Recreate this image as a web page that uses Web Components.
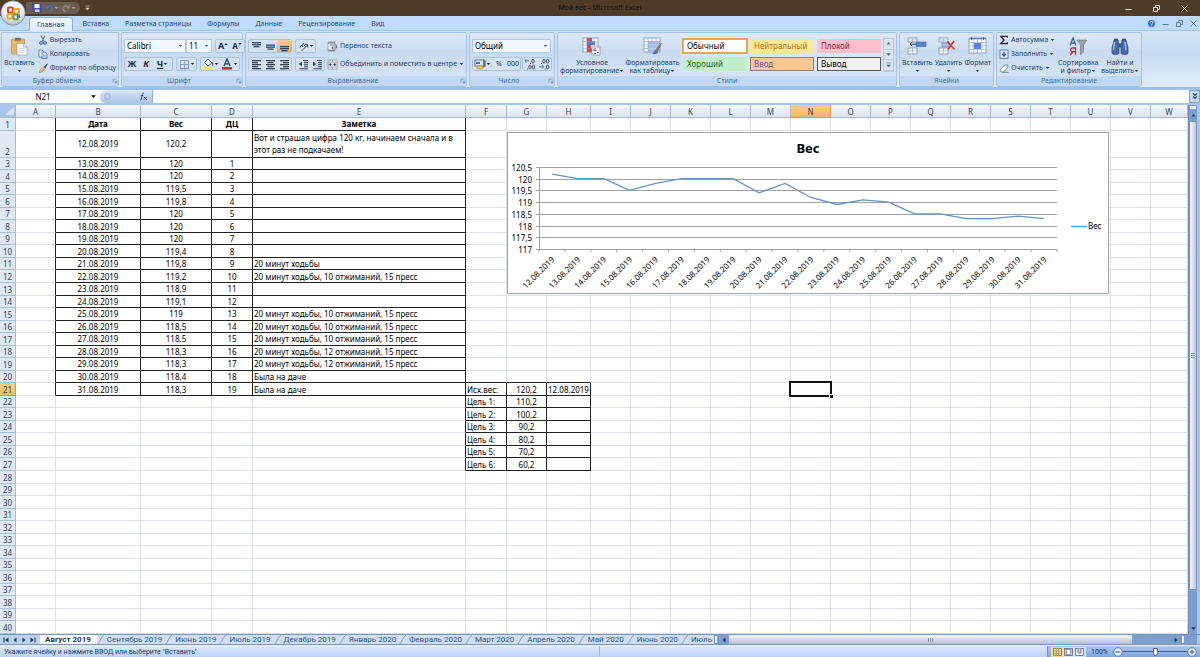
<!DOCTYPE html>
<html lang="ru">
<head>
<meta charset="utf-8">
<title>Мой вес - Microsoft Excel</title>
<style>
html,body{margin:0;height:100%;overflow:hidden}
body{font-family:"Noto Sans","Open Sans",sans-serif;font-size:7px;line-height:8px;color:#1e3f7a}
</style>
</head>
<body>
<xl-app></xl-app>
<script>
const RESET = `*{box-sizing:border-box}
button,input,select{font:inherit;color:inherit;margin:0;padding:0;border:0;background:none;border-radius:0;outline:0}
button{display:flex;align-items:center;justify-content:center;white-space:nowrap}
xl-icon{flex:none}`;

function define(name, css, html, setup) {
  const tpl = document.createElement('template');
  tpl.innerHTML = `<style>${RESET}${css}</style>${html}`;
  customElements.define(name, class extends HTMLElement {
    constructor() {
      super();
      this.attachShadow({mode: 'open'}).append(tpl.content.cloneNode(true));
    }
    connectedCallback() { if (setup) setup.call(this, this.shadowRoot); }
  });
}

/* ---------- icons: name -> [width, height, markup] ---------- */
const lines = (rows, y0 = 2) => rows.map(([x, w], i) => `<rect x="${x}" y="${y0 + i * 2}" width="${w}" height="1.3" fill="#35405a"/>`).join('');
const gridIcon = (x, y, w, h, n) => {
  let s = `<rect x="${x}" y="${y}" width="${w}" height="${h}" fill="#fff" stroke="#7a8fb5" stroke-width=".8"/>`;
  for (let i = 1; i < n; i++) s += `<path d="M${x + w * i / n} ${y}v${h}M${x} ${y + h * i / n}h${w}" stroke="#9aabca" stroke-width=".7"/>`;
  return s;
};
const ICONS = {
  office: [26, 26, `<defs><radialGradient id="g" cx=".5" cy=".35" r=".65"><stop offset="0" stop-color="#fff"/><stop offset=".65" stop-color="#e8eaee"/><stop offset="1" stop-color="#a9b3c2"/></radialGradient></defs><circle cx="13" cy="13" r="12.2" fill="url(#g)" stroke="#8290a5" stroke-width=".8"/><g fill="none" stroke-width="2"><rect x="8" y="7.500" width="5" height="5" rx="1" stroke="#dd4a22"/><rect x="14" y="9" width="5" height="4.500" rx="1" stroke="#eea33a"/><rect x="7.500" y="14" width="5" height="4.500" rx="1" stroke="#e8a91c"/><rect x="13.500" y="14.500" width="4.500" height="5" rx="1" stroke="#6aa43a"/></g><path d="M17 14.500h3v3.500h-3z" fill="#3f78c4"/>`],
  save: [10, 10, `<path d="M1 1h8v8H1z" fill="#4b54c0" stroke="#2c338b" stroke-width=".6"/><rect x="2.500" y="1" width="5" height="4" fill="#f2f4ff"/><rect x="3" y="6.500" width="4.500" height="2.500" fill="#d3d8f2"/>`],
  undo: [10, 10, `<path d="M2.500 4.500C5 1.800 8.500 3 8.300 5.600 8 7.500 6.500 8.300 5.500 8.500" fill="none" stroke="#4a6cc3" stroke-width="1.600"/><path d="M1.200 2l.3 4.300L5 4.800z" fill="#4a6cc3"/>`],
  redo: [10, 10, `<path d="M7.500 4.500C5 1.800 1.700 3 1.800 5.600 2 7.500 3.500 8.300 4.500 8.500" fill="none" stroke="#8b8787" stroke-width="1.400"/><path d="M8.800 2l-.3 4.300L5 4.800z" fill="#8b8787"/>`],
  down: [5, 4, `<path d="M.8 1h3.400L2.500 3z" fill="currentColor"/>`],
  bar: [5, 6, `<path d="M.5 1h4M.8 3h3.400L2.500 5z" stroke="currentColor" stroke-width=".7" fill="currentColor"/>`],
  launcher: [6, 6, `<path d="M1 4.500V1h3.500" fill="none" stroke="#7e9cc8" stroke-width=".8"/><path d="M2.500 2.500l2 2M5 2.800V5H2.800z" fill="#7e9cc8" stroke="#7e9cc8" stroke-width=".6"/>`],
  paste: [20, 19, `<rect x="2.500" y="2" width="13" height="15" rx="1" fill="#ecb75c" stroke="#b98a3e" stroke-width=".7"/><rect x="6" y=".8" width="6" height="3" rx="1" fill="#6c6f7c"/><path d="M8 6.500h6.500l3.500 3.500v8H8z" fill="#fff" stroke="#8b9cbb" stroke-width=".7"/><path d="M14.500 6.500V10H18" fill="#dfe7f5" stroke="#8b9cbb" stroke-width=".6"/><path d="M10 11.500h6M10 13.500h6M10 15.500h4" stroke="#b9c7df" stroke-width=".7"/>`],
  cut: [10, 10, `<path d="M3 .5l3 6M7 .5l-3 6" stroke="#5b79a8" stroke-width="1.100"/><circle cx="3" cy="8" r="1.400" fill="none" stroke="#2f57a8"/><circle cx="7" cy="8" r="1.400" fill="none" stroke="#2f57a8"/>`],
  copy: [10, 10, `<path d="M1 1h3l2 2v5H1z" fill="#fff" stroke="#3c66ad" stroke-width=".8"/><path d="M4 3h3l2 2v4.500H4z" fill="#dfeafc" stroke="#3c66ad" stroke-width=".8"/><path d="M5 6.500h3M5 8h3" stroke="#3c66ad" stroke-width=".5"/>`],
  brush: [10, 10, `<path d="M9.500.8L6 4l1 1.300z" fill="#4c5e89" stroke="#4c5e89"/><path d="M5.500 4L2 7l-1 2.500 3-.5 3.200-3.500z" fill="#f1c24e" stroke="#a9843a" stroke-width=".6"/>`],
  borders: [11, 11, `<path d="M1.500 1.500h8v8h-8zM5.500 1.500v8M1.500 5.500h8" fill="none" stroke="#7d93bb" stroke-width=".8"/><path d="M1 9.700h9" stroke="#7d93bb" stroke-width="1"/>`],
  fill: [12, 12, `<path d="M2.500 4.500L6 1l4 4-4 3z" fill="#eaf0fa" stroke="#47639c" stroke-width=".9"/><path d="M9.500 4c1.500 1 1.500 2.500 1 4" stroke="#3a6ac0" stroke-width="1.200" fill="none"/><rect x="1" y="9" width="10" height="2.600" fill="#fff03c"/>`],
  fontcolor: [12, 12, `<path d="M3 8L6 1l3 7M4 5.800h4" fill="none" stroke="#27407c" stroke-width="1.300"/><rect x="1" y="9" width="10" height="2.600" fill="#e02424"/>`],
  top: [11, 11, lines([[1, 9], [1, 9], [2.5, 6]], 1)],
  middle: [11, 11, lines([[1, 9], [1, 9], [2.5, 6]], 3.5)],
  bottom: [11, 11, lines([[1, 9], [1, 9], [2.5, 6]], 5)],
  left: [11, 11, lines([[1, 9], [1, 6], [1, 9], [1, 6], [1, 9]], 1)],
  center: [11, 11, lines([[1, 9], [2.5, 6], [1, 9], [2.5, 6], [1, 9]], 1)],
  right: [11, 11, lines([[1, 9], [4, 6], [1, 9], [4, 6], [1, 9]], 1)],
  orient: [11, 11, `<path d="M2 6.500l1.500-2.500 1.500 2M4.500 4.500l1-2.500M6 5l2-2.500" fill="none" stroke="#35405a" stroke-width="1"/><path d="M3.500 10L9.500 4M9.800 6.500V3.700H7" fill="none" stroke="#35405a" stroke-width=".9"/>`],
  outdent: [11, 11, `<path d="M5 1.500h5M6 3.600h4M6 5.700h4M6 7.800h4M1.500 9.800H10" stroke="#35405a" stroke-width="1.100"/><path d="M.5 5L4 2.700v4.600z" fill="#27498f"/>`],
  indent: [11, 11, `<path d="M5 1.500h5M6 3.600h4M6 5.700h4M6 7.800h4M1.500 9.800H10" stroke="#35405a" stroke-width="1.100"/><path d="M4.500 5L1 2.700v4.600z" fill="#27498f"/>`],
  wrap: [11, 11, `<rect x="1" y="1" width="7" height="9" fill="#eef2f8" stroke="#8a93a6" stroke-width=".7"/><path d="M1 1.800h7M1 9.400h7" stroke="#777f90" stroke-width="1.200"/><path d="M2.500 4h7v3H5M6.500 5.500L4.800 7l1.700 1.500" fill="none" stroke="#5c6c90" stroke-width=".9"/>`],
  merge: [11, 11, `<rect x="1" y="1" width="9" height="9" fill="#eef2f8" stroke="#8a93a6" stroke-width=".7"/><path d="M1 3.200h9M1 8h9M5.500 1v2M5.500 8v2" stroke="#8a93a6" stroke-width=".7"/><path d="M1.500 5.600h2M9.500 5.600h-2M3 4.300v2.600l1.200-1.300zM8 4.300v2.600L6.800 5.600z" stroke="#27407c" stroke-width=".6"/>`],
  money: [12, 12, `<rect x="1" y="2" width="9" height="6" fill="#dfe7dc" stroke="#44618f" stroke-width=".8"/><rect x="2" y="4" width="4" height="2" fill="#4a6cb5"/><path d="M9.500 1l2 1.500v6L9 10z" fill="#4a6cb5"/><ellipse cx="6" cy="9.500" rx="3.500" ry="1.700" fill="#eac04c" stroke="#a07d24" stroke-width=".5"/>`],
  inc: [12, 12, `<g fill="none" stroke="#26304a" stroke-width=".8"><ellipse cx="9" cy="3.200" rx="1.200" ry="1.900"/><ellipse cx="6" cy="9" rx="1.200" ry="1.900"/><ellipse cx="9.600" cy="9" rx="1.200" ry="1.900"/></g><path d="M6.500 4.800v1M3.500 10.500v1" stroke="#26304a" stroke-width=".9"/><path d="M5 2.800H1M2.400 1L1 2.800l1.400 1.700" fill="none" stroke="#3866b8" stroke-width=".9"/>`],
  dec: [12, 12, `<g fill="none" stroke="#26304a" stroke-width=".8"><ellipse cx="6" cy="3.200" rx="1.200" ry="1.900"/><ellipse cx="9.600" cy="3.200" rx="1.200" ry="1.900"/><ellipse cx="9.600" cy="9" rx="1.200" ry="1.900"/></g><path d="M3.500 4.800v1M7.300 10.500v1" stroke="#26304a" stroke-width=".9"/><path d="M1 8.800h4.500M4.200 7l1.400 1.800-1.400 1.700" fill="none" stroke="#3866b8" stroke-width=".9"/>`],
  cond: [20, 19, gridIcon(1, 1, 15, 14, 4) + `<rect x="5" y="1" width="5" height="3.500" fill="#d8474e"/><rect x="5" y="4.500" width="8" height="3.500" fill="#5b79cf"/><rect x="5" y="8" width="4" height="3.500" fill="#d8474e"/><rect x="5" y="11.500" width="6" height="3.500" fill="#d8474e"/><rect x="10" y="10" width="8" height="8" fill="#f5f6f9" stroke="#777f90" stroke-width=".6"/><path d="M11.500 12.500l2.500-1M11.500 13.500h3M15 15.500h2M12 16.500h2" stroke="#35405a" stroke-width=".8"/>`],
  tablefmt: [20, 19, gridIcon(1, 1, 16, 14, 4) + `<rect x="5" y="4.500" width="12" height="10" fill="#6f95e2" opacity=".65"/><path d="M5 8h12M5 11.500h12M9 4.500v10M13 4.500v10" stroke="#dbe6fb" stroke-width=".6"/><path d="M18.500 6l-5 6 1.500 1.500z" fill="#a9783c" stroke="#85592a" stroke-width=".6"/><path d="M13.500 12.500c-2.500 0-2 3-4.500 4 3 1.500 6.500.5 6-2.500z" fill="#56749f"/>`],
  insert: [20, 18, gridIcon(1, 1, 9, 4, 2) + gridIcon(1, 11, 9, 6, 2) + `<rect x="9" y="5" width="10" height="4.500" fill="#5b83cf" stroke="#3a60a8" stroke-width=".6"/><path d="M9 7.200H3M5.300 5.200L3 7.200l2.300 2" fill="none" stroke="#35405a"/>`],
  remove: [20, 18, gridIcon(1, 1, 9, 4, 2) + gridIcon(1, 11, 9, 6, 2) + `<rect x="4" y="6" width="7" height="4" fill="#a9bfe8" stroke="#5c78ae" stroke-width=".6"/><path d="M9.500 4.500l7 8M16 4l-6 8.500" stroke="#e0382c" stroke-width="1.700"/>`],
  format: [20, 18, gridIcon(1, 2, 17, 14, 4) + `<rect x="6" y="6" width="7" height="6" fill="#5b83dc"/><path d="M1 1.200h17M3.500 0v3M15.500 0v3" stroke="#35507f" stroke-width=".8"/>`],
  sum: [10, 10, `<path d="M8.300 2.800V1.300H1.800L5 5 1.800 8.700h6.500V7.200" fill="none" stroke="#1c2438" stroke-width="1.300"/>`],
  filldown: [10, 10, `<rect x="1" y="1" width="8" height="8.500" fill="#e9f0fd" stroke="#3d65b4" stroke-width=".8"/><path d="M5 2.500v4M3 4.800l2 2.400 2-2.400" fill="none" stroke="#2a54ad" stroke-width="1.300"/>`],
  eraser: [10, 10, `<path d="M1 7l4.500-5h3.500l-.5 2.500L4.500 9H2z" fill="#fff" stroke="#5a6f97" stroke-width=".8"/><path d="M3.500 9.300h6" stroke="#5a6f97" stroke-width=".8"/>`],
  sort: [20, 19, `<path d="M9 3h10l-3.500 5v7l-3 2.500V8z" fill="#9c9fa6" stroke="#6d7078" stroke-width=".6"/><path d="M2 8.500L5 1l3 7.500M3.200 6h3.600" fill="none" stroke="#3b62b4" stroke-width="1.300"/><path d="M7.500 18v-7H4.500c-2.500 0-2.500 3.700 0 3.700h3M5 14.700L2.200 18" fill="none" stroke="#b0303a" stroke-width="1.300"/>`],
  find: [20, 19, `<path d="M4 3h4l1 4v9c0 2-7 2-7 0v-5zM16 3h-4l-1 4v9c0 2 7 2 7 0v-5z" fill="#4a6aa9" stroke="#2e4a80" stroke-width=".7"/><path d="M4.500 5L3.500 13M15 5l1 8" stroke="#a9c0ea" stroke-width="1.400"/><rect x="8.500" y="6.500" width="3" height="4" fill="#37568f"/><path d="M4 2.500h4M12 2.500h4" stroke="#2e4a80" stroke-width="1.400"/>`],
  help: [9, 9, `<circle cx="4.500" cy="4.500" r="4" fill="#3a66c8" stroke="#dfe9fa" stroke-width=".7"/><path d="M3.200 3.600c0-1.700 2.700-1.600 2.700 0 0 1-1.300 1-1.300 2M4.600 6.400v.9" stroke="#fff" stroke-width=".9" fill="none"/>`],
  min: [9, 9, `<path d="M1.500 5.500h6" stroke="currentColor"/>`],
  restore: [9, 9, `<path d="M1.500 3.500h4v4h-4zM3.500 3.500v-2h4v4h-2" fill="none" stroke="currentColor" stroke-width=".9"/>`],
  close: [9, 9, `<path d="M1.500 1.500l6 6M7.500 1.500l-6 6" stroke="currentColor" stroke-width=".9"/>`],
  fx: [9, 9, `<path d="M5 1C3.500.8 3.300 2 3 4S2.500 8.300 1 8M1.800 3.500h2.500M4.800 4.800l3 3M7.800 4.800l-3 3" fill="none" stroke="#2b3c63" stroke-width=".9"/>`],
  chev: [8, 9, `<path d="M2 1.500l2 2 2-2M2 4.500l2 2 2-2" fill="none" stroke="#26457c" stroke-width="1.200"/>`],
  corner: [12, 10, `<path d="M11 1v8H2z" fill="#d7e4f5"/>`],
  first: [8, 8, `<path d="M2 1.500v5" stroke="currentColor"/><path d="M6.500 1.500v5L3 4z" fill="currentColor"/>`],
  prev: [8, 8, `<path d="M5.500 1.500v5L2.500 4z" fill="currentColor"/>`],
  next: [8, 8, `<path d="M2.500 1.500v5L5.500 4z" fill="currentColor"/>`],
  last: [8, 8, `<path d="M6 1.500v5" stroke="currentColor"/><path d="M1.500 1.500v5L5 4z" fill="currentColor"/>`],
  up: [7, 7, `<path d="M1.500 4.500h4L3.500 2z" fill="currentColor"/>`],
  dn: [7, 7, `<path d="M1.200 2.300h4.600L3.500 5z" fill="currentColor"/>`],
  sup: [4, 9, `<path d="M.3 3h3.400L2 1z" fill="currentColor"/>`],
  sdn: [4, 9, `<path d="M.3 1h3.400L2 3z" fill="currentColor"/>`],
  slash: [7, 10, `<path d="M0 9.500C2 9.500 4.500.5 7 .5" fill="none" stroke="#6f8cba" stroke-width=".8"/>`],
  view1: [9, 8, `<rect x=".5" y=".5" width="8" height="7" fill="#fff3c4" stroke="#8a7440" stroke-width=".8"/><path d="M.5 3h8M.5 5.300h8M3.200.5v7M5.800.5v7" stroke="#8a7440" stroke-width=".7"/>`],
  view2: [9, 8, `<rect x=".5" y=".5" width="8" height="7" fill="#c8ccd6" stroke="#5d6c8a" stroke-width=".8"/><rect x="2.500" y="1.500" width="4" height="5" fill="#fff" stroke="#5d6c8a" stroke-width=".6"/>`],
  view3: [9, 8, `<rect x=".5" y=".5" width="8" height="7" fill="#f4f6fa" stroke="#5d6c8a" stroke-width=".8"/><path d="M3 .5v4.500h3V.5" fill="#c8ccd6" stroke="#5d6c8a" stroke-width=".8"/>`],
  minus: [10, 10, `<circle cx="5" cy="5" r="4.200" fill="#e9f1fd" stroke="#4c689b" stroke-width=".8"/><path d="M2.700 5h4.600" stroke="#35507f"/>`],
  plus: [10, 10, `<circle cx="5" cy="5" r="4.200" fill="#e9f1fd" stroke="#4c689b" stroke-width=".8"/><path d="M2.700 5h4.600M5 2.700v4.600" stroke="#35507f"/>`],
};
define('xl-icon', `:host{display:inline-flex}span{display:flex}svg{display:block}`, `<span></span>`, function (root) {
  const [w, h, body] = ICONS[this.getAttribute('name')];
  root.querySelector('span').innerHTML = `<svg width="${w}" height="${h}" viewBox="0 0 ${w} ${h}" aria-hidden="true">${body}</svg>`;
});

/* ---------- title bar ---------- */
define('xl-titlebar', `
:host{display:grid;grid-template-columns:1fr auto 1fr;align-items:center;height:16px;background:#503c26;color:#120c05}
.qat{display:flex;align-items:center;height:13px;margin-left:26px}
.pill{display:flex;align-items:center;gap:2px;height:12px;padding:0 4px 0 6px;border-radius:0 6px 6px 0;background:#6b5d51;color:#b3aaa3}
.more{margin-left:5px;color:#cfc8c2}
.win{display:flex;justify-content:flex-end;gap:19px;padding-right:11px;color:#fff}`,
`<div class="qat"><div class="pill"><button aria-label="Сохранить"><xl-icon name="save"></xl-icon></button><button aria-label="Отменить"><xl-icon name="undo"></xl-icon><xl-icon name="down"></xl-icon></button><button aria-label="Вернуть"><xl-icon name="redo"></xl-icon><xl-icon name="down"></xl-icon></button></div><button class="more" aria-label="Настройка панели"><xl-icon name="bar"></xl-icon></button></div>
<span>Мой вес - Microsoft Excel</span>
<div class="win"><button aria-label="Свернуть"><xl-icon name="min"></xl-icon></button><button aria-label="Восстановить"><xl-icon name="restore"></xl-icon></button><button aria-label="Закрыть"><xl-icon name="close"></xl-icon></button></div>`);

/* ---------- ribbon tabs ---------- */
define('xl-menu', `
:host{display:flex;height:15px;padding-left:29px;background:#bfdbff;border-bottom:1px solid #9dc0ea;color:#1f4788}
button{padding:1px 8px 0;height:15px}
button:first-of-type{margin:1px 2px 0 0;height:14px;padding:0 7px;background:linear-gradient(#f4f9ff,#dfeafa);border:1px solid #8fb3e0;border-bottom:0;border-radius:3px 3px 0 0}
.doc{display:flex;gap:5px;align-items:center;margin-left:auto;padding-right:2px;color:#5874a2}
.doc button,.doc button:first-of-type{padding:0;margin:0;height:9px;width:9px;border:0;background:none}`,
`<button>Главная</button><button>Вставка</button><button>Разметка страницы</button><button>Формулы</button><button>Данные</button><button>Рецензирование</button><button>Вид</button>
<div class="doc"><button aria-label="Справка"><xl-icon name="help"></xl-icon></button><button aria-label="Свернуть книгу"><xl-icon name="min"></xl-icon></button><button aria-label="Восстановить книгу"><xl-icon name="restore"></xl-icon></button><button aria-label="Закрыть книгу"><xl-icon name="close"></xl-icon></button></div>`);

/* ---------- ribbon pieces ---------- */
define('xl-group', `
:host{display:flex;flex-direction:column;flex:none;height:55px;border:1px solid #a5c3ea;border-radius:2px;background:linear-gradient(#dce8f7,#cfdff3 30%,#c8daf0 32%,#d9e8f8)}
.body{display:flex;flex:1;min-height:0;align-items:flex-start;justify-content:space-between;padding:0 2px}
footer{display:flex;align-items:center;height:10px;background:#c0d8f1;color:#4570b0}
footer span{flex:1;text-align:center}`,
`<div class="body"><slot></slot></div><footer><span></span></footer>`, function (root) {
  root.querySelector('footer span').textContent = this.getAttribute('label');
  if (this.hasAttribute('launcher')) root.querySelector('footer').insertAdjacentHTML('beforeend', '<xl-icon name="launcher"></xl-icon>');
});

define('xl-big', `
:host{display:block}
button{flex-direction:column;justify-content:flex-start;height:42px;padding-top:4px;text-align:center;color:inherit}
.i{display:flex;height:19px;margin-bottom:3px}
.t{white-space:pre;line-height:8px}
.t xl-icon{vertical-align:middle;height:8px;align-items:center}`,
`<button><span class="i"></span><span class="t"><slot></slot></span></button>`, function (root) {
  root.querySelector('.i').innerHTML = `<xl-icon name="${this.getAttribute('icon')}"></xl-icon>`;
  root.querySelector('.t').insertAdjacentHTML('beforeend', '<xl-icon name="down"></xl-icon>');
});

define('xl-small', `
:host{display:block}
button{height:14px;gap:2px;justify-content:flex-start}`,
`<button><slot></slot></button>`, function (root) {
  const b = root.querySelector('button');
  b.insertAdjacentHTML('afterbegin', `<xl-icon name="${this.getAttribute('icon')}"></xl-icon>`);
  if (this.hasAttribute('menu')) b.insertAdjacentHTML('beforeend', '<xl-icon name="down"></xl-icon>');
});

define('xl-combo', `
:host{display:flex;position:relative;height:14px;background:#f3f8ff;border:1px solid #b0c8e8;color:#000;font-size:8px}
select{flex:1;min-width:0;appearance:none;padding-left:2px;line-height:12px}
xl-icon{position:absolute;right:2px;top:4px;color:#3a5c97;pointer-events:none}`,
`<select><option></option></select><xl-icon name="down"></xl-icon>`, function (root) {
  root.querySelector('select').setAttribute('aria-label', this.getAttribute('label'));
  root.querySelector('option').textContent = this.getAttribute('value');
});

/* ---------- ribbon ---------- */
define('xl-ribbon', `
:host{display:flex;gap:2px;height:59px;padding:1px 1px 0;background:linear-gradient(#d5e4f6,#c7daf1 40%,#dcebfb 90%);border-bottom:3px solid #9dbfe8}
.clip{width:118px}.font{width:122px}.align{width:222px}.num{width:86px}.styles{width:340px}.cells{width:95px}.edit{width:146px}
.col{display:flex;flex-direction:column}
.two{gap:4px;padding-top:6px}
.row{display:flex;gap:3px}
.set{display:flex;height:14px;border:1px solid #a9c3e6;border-radius:2px;background:#d3e2f5}
.set button{width:14px;color:#1d2b4a}
.set button.m{width:19px}
.set button.on{background:linear-gradient(#fcd08a,#f7ab45)}
.set b,.set i{font-size:9px}
.gal{display:grid;grid-template-columns:repeat(3,66px) 11px;grid-template-rows:16px 16px;gap:2px 1px;margin-top:4px;padding:1px 0 0 1px;background:#d9e6f7;font-size:8px;color:#000}
.gal button{justify-content:flex-start;padding-left:3px;margin:1px;border:1px solid transparent}
.gal .n{margin:0;background:#fff;border:2px solid #e4a94c;padding-left:3px}
.gal .neu{background:#ffe795;color:#a5742a}
.gal .bad{background:#ffbfcb;color:#97182c}
.gal .good{background:#c3eccb;color:#1a6b27}
.gal .in{background:#fdc794;color:#6b5a78;border-color:#8b8178}
.gal .out{background:#f1f1f1;border-color:#55585e}
.sc{grid-column:4;grid-row:1/3;display:flex;flex-direction:column;border:1px solid #b6cbe8;color:#4d6ca3}
.gal .sc button{flex:1;margin:0;padding:0;justify-content:center;border:0;border-bottom:1px solid #b6cbe8}`,
`<xl-group class="clip" label="Буфер обмена" launcher>
  <xl-big icon="paste">Вставить
</xl-big>
  <div class="col"><xl-small icon="cut">Вырезать</xl-small><xl-small icon="copy">Копировать</xl-small><xl-small icon="brush">Формат по образцу</xl-small></div>
</xl-group>
<xl-group class="font" label="Шрифт" launcher>
  <div class="col two">
    <div class="row"><div class="row" style="gap:0"><xl-combo style="width:62px" label="Шрифт" value="Calibri"></xl-combo><xl-combo style="width:26px" label="Размер" value="11"></xl-combo></div>
      <div class="set"><button aria-label="Увеличить"><b>A</b><xl-icon name="sup"></xl-icon></button><button aria-label="Уменьшить"><b style="font-size:8px">A</b><xl-icon name="sdn"></xl-icon></button></div></div>
    <div class="row"><div class="set"><button><b>Ж</b></button><button><b><i>К</i></b></button><button class="m"><b><u>Ч</u></b><xl-icon name="down"></xl-icon></button></div>
      <div class="set"><button class="m" aria-label="Границы"><xl-icon name="borders"></xl-icon><xl-icon name="down"></xl-icon></button></div>
      <div class="set"><button class="m" aria-label="Заливка"><xl-icon name="fill"></xl-icon><xl-icon name="down"></xl-icon></button><button class="m" aria-label="Цвет текста"><xl-icon name="fontcolor"></xl-icon><xl-icon name="down"></xl-icon></button></div></div>
  </div>
</xl-group>
<xl-group class="align" label="Выравнивание" launcher>
  <div class="col two">
    <div class="row"><div class="set"><button aria-label="По верхнему краю"><xl-icon name="top"></xl-icon></button><button aria-label="По середине"><xl-icon name="middle"></xl-icon></button><button class="on" aria-label="По нижнему краю"><xl-icon name="bottom"></xl-icon></button></div><div class="set"><button class="m" aria-label="Ориентация"><xl-icon name="orient"></xl-icon><xl-icon name="down"></xl-icon></button></div></div>
    <div class="row"><div class="set"><button aria-label="Влево"><xl-icon name="left"></xl-icon></button><button aria-label="По центру"><xl-icon name="center"></xl-icon></button><button aria-label="Вправо"><xl-icon name="right"></xl-icon></button></div><div class="set"><button aria-label="Уменьшить отступ"><xl-icon name="outdent"></xl-icon></button><button aria-label="Увеличить отступ"><xl-icon name="indent"></xl-icon></button></div></div>
  </div>
  <div class="col two"><xl-small icon="wrap">Перенос текста</xl-small><xl-small icon="merge" menu>Объединить и поместить в центре</xl-small></div>
</xl-group>
<xl-group class="num" label="Число" launcher>
  <div class="col two">
    <xl-combo style="width:79px" label="Формат" value="Общий"></xl-combo>
    <div class="row" style="gap:1px"><div class="set"><button class="m" aria-label="Денежный"><xl-icon name="money"></xl-icon><xl-icon name="down"></xl-icon></button><button>%</button><button>000</button></div><div class="set"><button aria-label="Увеличить разрядность"><xl-icon name="inc"></xl-icon></button><button aria-label="Уменьшить разрядность"><xl-icon name="dec"></xl-icon></button></div></div>
  </div>
</xl-group>
<xl-group class="styles" label="Стили">
  <xl-big icon="cond">Условное
форматирование</xl-big>
  <xl-big icon="tablefmt">Форматировать
как таблицу</xl-big>
  <div class="gal"><button class="n">Обычный</button><button class="neu">Нейтральный</button><button class="bad">Плохой</button><button class="good">Хороший</button><button class="in">Ввод</button><button class="out">Вывод</button>
    <div class="sc"><button aria-label="Вверх"><xl-icon name="up"></xl-icon></button><button aria-label="Вниз"><xl-icon name="dn"></xl-icon></button><button aria-label="Все стили"><xl-icon name="bar"></xl-icon></button></div></div>
</xl-group>
<xl-group class="cells" label="Ячейки">
  <xl-big icon="insert">Вставить
</xl-big><xl-big icon="remove">Удалить
</xl-big><xl-big icon="format">Формат
</xl-big>
</xl-group>
<xl-group class="edit" label="Редактирование">
  <div class="col"><xl-small icon="sum" menu>Автосумма</xl-small><xl-small icon="filldown" menu>Заполнить</xl-small><xl-small icon="eraser" menu>Очистить</xl-small></div>
  <xl-big icon="sort">Сортировка
и фильтр</xl-big>
  <xl-big icon="find">Найти и
выделить</xl-big>
</xl-group>`);

/* ---------- formula bar ---------- */
define('xl-formula', `
:host{display:flex;height:15px;background:#fff;border-bottom:2px solid #a9c6ea;font-size:8px;color:#000}
.name{width:86px;text-align:center}
.drop{width:14px;color:#000}
.fx{display:flex;align-items:center;justify-content:space-between;width:53px;padding:0 4px;border-radius:6px 0 0 6px;border-right:1px solid #8fb0dc;background:linear-gradient(#dbe8f9,#a9c4e8)}
.fx i{width:7px;height:7px;border-radius:50%;background:#bdd0ea;border:1px solid #9ab4da}
.txt{flex:1;padding:0 4px}
.exp{width:11px;background:#c6dbf5;border:1px solid #7fa3d4}`,
`<input class="name" value="N21" aria-label="Имя"><button class="drop" aria-label="Список имён"><xl-icon name="dn"></xl-icon></button>
<div class="fx"><i></i><button aria-label="Вставить функцию"><xl-icon name="fx"></xl-icon></button></div>
<input class="txt" aria-label="Строка формул"><button class="exp" aria-label="Развернуть"><xl-icon name="chev"></xl-icon></button>`);

/* ---------- data ---------- */
const WALK = '20 минут ходьбы', GYM10 = WALK + ', 10 отжиманий, 15 пресс', GYM12 = WALK + ', 12 отжиманий, 15 пресс';
const LOG = [
  ['12.08.2019', '120,2', '', 'Вот и страшая цифра 120 кг, начинаем сначала и в этот раз не подкачаем!'],
  ['13.08.2019', '120', '1', ''], ['14.08.2019', '120', '2', ''], ['15.08.2019', '119,5', '3', ''],
  ['16.08.2019', '119,8', '4', ''], ['17.08.2019', '120', '5', ''], ['18.08.2019', '120', '6', ''],
  ['19.08.2019', '120', '7', ''], ['20.08.2019', '119,4', '8', ''], ['21.08.2019', '119,8', '9', WALK],
  ['22.08.2019', '119,2', '10', GYM10], ['23.08.2019', '118,9', '11', ''], ['24.08.2019', '119,1', '12', ''],
  ['25.08.2019', '119', '13', GYM10], ['26.08.2019', '118,5', '14', GYM10], ['27.08.2019', '118,5', '15', GYM10],
  ['28.08.2019', '118,3', '16', GYM12], ['29.08.2019', '118,3', '17', GYM12],
  ['30.08.2019', '118,4', '18', 'Была на даче'], ['31.08.2019', '118,3', '19', 'Была на даче']];
const GOALS = [['Исх.вес:', '120,2', '12.08.2019'], ['Цель 1:', '110,2', ''], ['Цель 2:', '100,2', ''], ['Цель 3:', '90,2', ''],
  ['Цель 4:', '80,2', ''], ['Цель 5:', '70,2', ''], ['Цель 6:', '60,2', '']];

/* ---------- grid ---------- */
define('xl-grid', `
:host{display:block;min-width:0;min-height:0;overflow:hidden;background:#fff;color:#000;font-size:8px;line-height:12px}
table{width:100%;height:100%;table-layout:fixed;border-collapse:separate;border-spacing:0}
tr{height:12px}
thead tr{height:13px}
tr.tall{height:26px}
td,th{padding:0;font-weight:400;border-right:1px solid #dadfe9;border-bottom:1px solid #dadfe9;text-align:center;vertical-align:middle;white-space:nowrap;line-height:11px}
thead th{background:linear-gradient(#f4f8fc,#dce3ee);border-color:#a9b7cf;color:#33415e}
tbody th{background:#dfe9f5;border-color:#a9bcd6;color:#33415e;vertical-align:bottom}
thead th:first-child{background:#a9c4e9}
thead th.on,tbody th.on{background:linear-gradient(#fbd189,#f2b95e);border-color:#d79a3c}
td.r{border-right-color:#222}td.b{border-bottom-color:#222}
td.l{text-align:left;padding-left:1px}
td.h{font-weight:700}
.tall td.l{white-space:normal;line-height:12px}
td.sel{position:relative}
td.sel::before{content:"";position:absolute;inset:-2px;border:2px solid #111}
td.sel::after{content:"";position:absolute;right:-3px;bottom:-3px;width:3px;height:3px;background:#111;border:1px solid #fff;border-width:1px 0 0 1px;box-sizing:content-box}
xl-icon{display:flex;justify-content:flex-end}`,
`<table></table>`, function (root) {
  const widths = [16, 40, 85, 71, 41, 213, 41, 40, 44];
  while (widths.length < 23) widths.push(40);
  const letters = 'ABCDEFGHIJKLMNOPQRSTUVW';
  const boxed = (r, c) => (r <= 21 && c >= 2 && c <= 5) || (r >= 21 && r <= 27 && c >= 6 && c <= 8);
  const value = (r, c) => {
    if (c >= 2 && c <= 5 && r <= 21) return r === 1 ? ['Дата', 'Вес', 'ДЦ', 'Заметка'][c - 2] : LOG[r - 2][c - 2];
    if (c >= 6 && c <= 8 && r >= 21 && r <= 27) return GOALS[r - 21][c - 6];
    return '';
  };
  let h = '<colgroup>' + widths.map(w => `<col style="width:${w}px">`).join('') + '<col></colgroup><thead><tr><th aria-label="Выделить всё"><xl-icon name="corner"></xl-icon></th>';
  for (const l of letters) h += `<th scope="col"${l === 'N' ? ' class="on"' : ''}>${l}</th>`;
  h += '</tr></thead><tbody>';
  for (let r = 1; r <= 40; r++) {
    h += `<tr${r === 2 ? ' class="tall"' : ''}><th scope="row"${r === 21 ? ' class="on"' : ''}>${r}</th>`;
    for (let c = 1; c <= 23; c++) {
      const k = [];
      if (boxed(r, c) || boxed(r, c + 1)) k.push('r');
      if (boxed(r, c) || boxed(r + 1, c)) k.push('b');
      if (r === 1) k.push('h');
      else if (c === 5 || c === 6) k.push('l');
      if (r === 21 && c === 14) k.push('sel');
      h += `<td class="${k.join(' ')}">${value(r, c)}</td>`;
    }
    h += '</tr>';
  }
  root.querySelector('table').innerHTML = h + '</tbody>';
});

/* ---------- chart ---------- */
define('xl-chart', `
:host{display:block;background:#fff;border:1px solid #a3a6ab}
svg{display:block}
text{font-size:8px;fill:#000}
.t{font-size:13px;font-weight:700}`,
`<svg width="600" height="160" viewBox="0 0 600 160" role="img" aria-label="Вес"></svg>`, function (root) {
  const x0 = 31, x1 = 549, y0 = 34, y1 = 116, step = (x1 - x0) / LOG.length;
  const y = v => y1 - (v - 117) * (y1 - y0) / 3.5;
  let s = '<text class="t" x="300" y="20" text-anchor="middle">Вес</text>';
  for (let i = 0; i < 8; i++) {
    const v = 117 + i / 2, yy = Math.round(y(v)) + .5;
    s += `<path d="M${x0 - 3} ${yy}H${x1}" stroke="#a0a0a0"/><text x="${x0 - 7}" y="${yy + 3}" text-anchor="end">${String(v).replace('.', ',')}</text>`;
  }
  s += `<path d="M${x0 + .5} ${y0}V${y1}" stroke="#a0a0a0"/>`;
  for (let i = 0; i <= LOG.length; i++) s += `<path d="M${x0 + i * step} ${y1}v3" stroke="#a0a0a0"/>`;
  const pts = LOG.map((d, i) => [x0 + (i + .5) * step, y(parseFloat(d[1].replace(',', '.')))]);
  s += `<polyline points="${pts.join(' ')}" fill="none" stroke="#5f95c8" stroke-width="1.300"/>`;
  LOG.forEach((d, i) => {
    const x = pts[i][0] + 3, yy = y1 + 11;
    s += `<text x="${x}" y="${yy}" text-anchor="end" transform="rotate(-45 ${x} ${yy})">${d[0]}</text>`;
  });
  s += '<path d="M563 93.500h16" stroke="#5f95c8" stroke-width="1.300"/><text x="580" y="96">Вес</text>';
  root.querySelector('svg').innerHTML = s;
});

/* ---------- vertical scroll bar ---------- */
define('xl-vscroll', `
:host{display:flex;flex-direction:column;width:12px;background:#7d9fd0;border-left:1px solid #6b8bbb;border-right:3px solid #a9c6ee;color:#1d3765}
.split{height:5px;background:#e6effb;border:1px solid #7d9bc8}
button{height:11px}
.thumb{flex:468;display:flex;align-items:center;justify-content:center;background:linear-gradient(90deg,#f4f7fb,#b9c8de);border:1px solid #7b93b8}
.thumb i{width:4px;height:5px;background:repeating-linear-gradient(#8090ab 0 1px,#eef 1px 2px)}
.rest{flex:33}`,
`<div class="split"></div><button aria-label="Вверх"><xl-icon name="up"></xl-icon></button><div class="thumb"><i></i></div><div class="rest"></div><button aria-label="Вниз"><xl-icon name="dn"></xl-icon></button>`);

/* ---------- sheet tabs ---------- */
define('xl-sheets', `
:host{display:flex;height:11px;background:#b9d2f1;border-top:1px solid #7a93b8;border-bottom:1px solid #7a93b8;font-family:Roboto,"Noto Sans",sans-serif;font-size:8px;line-height:9px;color:#2b5490}
.nav{display:flex;flex:none;width:40px;padding-left:1px;color:#17376e}
.nav button{width:9px}
.tabs{display:flex;flex:0 1 674px;min-width:0;overflow:hidden;background:#cfe0f6}
.tabs button{flex:none;padding:0 3px}
.tabs button.on{padding:0 6px 0 5px;background:#fff;font-weight:700;color:#1b3566}
.div{width:4px;background:#eaf2fc;border:1px solid #7d9bc8}
.bar{display:flex;flex:1;background:#7d9fd0;color:#17376e}
.bar button{width:11px}
.thumb{flex:403;display:flex;align-items:center;justify-content:center;background:linear-gradient(#f4f7fb,#b4c0d2)}
.thumb i{width:5px;height:4px;background:repeating-linear-gradient(90deg,#8090ab 0 1px,#eef 1px 2px)}
.rest{flex:38}
.end{width:15px;background:#7d9fd0;border-right:3px solid #a9c6ee}`,
`<div class="nav"><button aria-label="Первый лист"><xl-icon name="first"></xl-icon></button><button aria-label="Предыдущий лист"><xl-icon name="prev"></xl-icon></button><button aria-label="Следующий лист"><xl-icon name="next"></xl-icon></button><button aria-label="Последний лист"><xl-icon name="last"></xl-icon></button></div>
<div class="tabs"></div><div class="div"></div>
<div class="bar"><button aria-label="Влево"><xl-icon name="prev"></xl-icon></button><div class="thumb"><i></i></div><div class="rest"></div><button aria-label="Вправо"><xl-icon name="next"></xl-icon></button></div><div class="div"></div><div class="end"></div>`, function (root) {
  const names = ['Август 2019', 'Сентябрь 2019', 'Июнь 2019', 'Июль 2019', 'Декабрь 2019', 'Январь 2020', 'Февраль 2020', 'Март 2020', 'Апрель 2020', 'Май 2020', 'Июнь 2020', 'Июль'];
  root.querySelector('.tabs').innerHTML = names.map((n, i) => `<button${i ? '' : ' class="on"'}>${n}</button>`).join('<xl-icon name="slash"></xl-icon>');
});

/* ---------- status bar ---------- */
define('xl-status', `
:host{display:flex;height:12px;background:linear-gradient(#dce9fc,#b9d2f7);border-top:1px solid #e8f1fd;font-family:Roboto,"Noto Sans",sans-serif;color:#1c3a70}
.msg{flex:1;padding:2px 4px;border-right:1px solid #9dbbe6}
.mid{width:447px}
.tools{display:flex;align-items:center;flex:none;width:153px;padding-left:3px;border-left:1px solid #7394c6;background:linear-gradient(#a9c7f0,#7fa6dd)}
.views{display:flex;padding:0 1px;background:#d6e4f7}
.views button{width:11px;height:10px}
.views .on{background:#fbd46c}
.pct{width:23px;margin:0 2px 0 2px}
input{flex:1;min-width:0;height:10px;appearance:none;background:linear-gradient(#3f6098,#3f6098) center/100% 1px no-repeat}
input::-webkit-slider-thumb{appearance:none;width:5px;height:8px;background:#eef4fd;border:1px solid #4c689b;border-radius:0 0 3px 3px}
.tools>button:last-child{margin-right:3px}`,
`<div class="msg">Укажите ячейку и нажмите ВВОД или выберите "Вставить"</div><div class="mid"></div>
<div class="tools"><div class="views"><button class="on" aria-label="Обычный"><xl-icon name="view1"></xl-icon></button><button aria-label="Разметка страницы"><xl-icon name="view2"></xl-icon></button><button aria-label="Страничный"><xl-icon name="view3"></xl-icon></button></div>
<button class="pct">100%</button><button aria-label="Уменьшить"><xl-icon name="minus"></xl-icon></button><input type="range" min="0" max="200" value="100" aria-label="Масштаб"><button aria-label="Увеличить"><xl-icon name="plus"></xl-icon></button></div>`);

/* ---------- window ---------- */
define('xl-app', `
:host{display:flex;flex-direction:column;height:100vh;position:relative;overflow:hidden}
:host>*{flex:none}
.sheet{display:grid;flex:1;min-height:0;grid-template-columns:1fr auto;grid-template-rows:minmax(0,1fr);position:relative}
.orb{position:absolute;left:0;top:0;border-radius:50%}
xl-chart{position:absolute;left:507px;top:27px}`,
`<xl-titlebar></xl-titlebar><xl-menu></xl-menu><button class="orb" aria-label="Office"><xl-icon name="office"></xl-icon></button>
<xl-ribbon></xl-ribbon><xl-formula></xl-formula>
<div class="sheet"><xl-grid></xl-grid><xl-vscroll></xl-vscroll><xl-chart></xl-chart></div>
<xl-sheets></xl-sheets><xl-status></xl-status>`);
</script>
</body>
</html>
